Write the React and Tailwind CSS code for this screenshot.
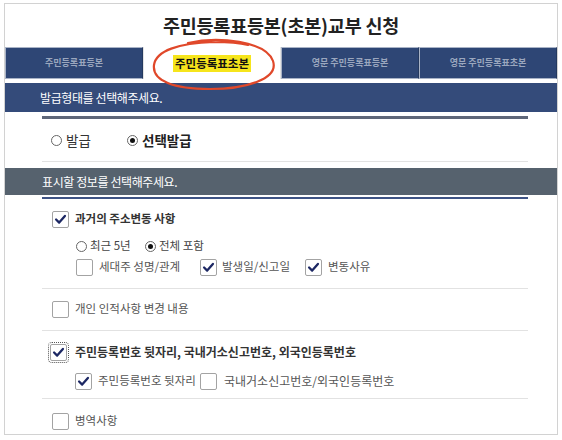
import React from "react";

// checkbox with the navy tick used on the form
function CheckBox({ checked, focused }) {
  return (
    <span
      className={`w-[17px] h-[17px] shrink-0 bg-white border border-[#a3a3a3] rounded-[2px] flex items-center justify-center ${
        focused ? "outline outline-1 outline-dotted outline-[#555] outline-offset-[1px]" : ""
      }`}
    >
      {checked && (
        <svg viewBox="0 0 17 17" className="w-[15px] h-[15px]">
          <path d="M3.5 8.5 L7 12 L13.5 4.5" fill="none" stroke="#1c2763" strokeWidth="2.6" strokeLinecap="round" strokeLinejoin="round" />
        </svg>
      )}
    </span>
  );
}

function Radio({ checked }) {
  return (
    <span className="w-[11px] h-[11px] shrink-0 rounded-full border border-[#666] bg-white flex items-center justify-center">
      {checked && <span className="w-[5px] h-[5px] rounded-full bg-[#111]" />}
    </span>
  );
}

const tabs = [
  { label: "주민등록표등본" },
  { label: "주민등록표초본", active: true },
  { label: "영문 주민등록표등본" },
  { label: "영문 주민등록표초본" },
];

export default function App() {
  return (
    <div className="relative w-[562px] h-[440px] bg-white pt-[3px] pl-[4px] font-['Noto_Sans_CJK_KR','Noto_Sans',sans-serif] text-[#333]">
      <div className="w-[554px] h-[432px] border border-[#d2d2d2] overflow-hidden">
        {/* Title */}
        <div className="h-[43px] flex items-center justify-center">
          <h1 className="text-[18.5px] font-bold text-[#222] tracking-[-0.2px]">주민등록표등본(초본)교부 신청</h1>
        </div>

        {/* Tabs */}
        <div className="flex h-[32px]">
          {tabs.map((t) =>
            t.active ? (
              <div key={t.label} className="flex-1 flex items-center justify-center bg-white border-x border-[#e3e3e3]">
                <span className="bg-[#f6e51c] px-[2px] text-[11.5px] font-bold text-[#111] leading-[17px]">{t.label}</span>
              </div>
            ) : (
              <div
                key={t.label}
                className="flex-1 flex items-center justify-center bg-[#2e4675] border border-[#a9b3c6] border-r-[#24395f]"
              >
                <span className="text-[9px] font-bold text-[#9ba7be]">{t.label}</span>
              </div>
            )
          )}
        </div>

        {/* 발급형태 */}
        <div className="mt-[4px] h-[29px] bg-[#344b7a] flex items-center pl-[35px]">
          <span className="text-[12px] text-white tracking-[-0.4px]">발급형태를 선택해주세요.</span>
        </div>
        <div className="ml-[37px] mr-[29px]">
          <div className="mt-[4px] h-[3px] bg-[#5f6779]" />
          <div className="h-[42px] flex items-center pl-[9px] text-[13.5px] text-[#333]">
            <div className="w-[76px] flex items-center gap-[4px]">
              <Radio />
              <span>발급</span>
            </div>
            <div className="flex items-center gap-[4px]">
              <Radio checked />
              <span className="font-semibold text-[#222]">선택발급</span>
            </div>
          </div>
          <div className="h-px bg-[#e2e2e2]" />
        </div>

        {/* 표시할 정보 */}
        <div className="mt-[6px] h-[27px] bg-[#56626e] flex items-center pl-[37px]">
          <span className="text-[12px] text-white tracking-[-0.4px]">표시할 정보를 선택해주세요.</span>
        </div>
        <div className="ml-[37px] mr-[29px] text-[11.5px]">
          <div className="mt-[2px] h-[2px] bg-[#3e5385]" />

          {/* 과거의 주소변동 사항 */}
          <div className="mt-[10px] h-[20px] flex items-center pl-[10px] gap-[6px]">
            <CheckBox checked />
            <span className="font-semibold text-[#333]">과거의 주소변동 사항</span>
          </div>
          <div className="mt-[7px] h-[20px] flex items-center pl-[34px] text-[#444]">
            <div className="w-[69px] flex items-center gap-[3px]">
              <Radio />
              <span>최근 5년</span>
            </div>
            <div className="flex items-center gap-[3px]">
              <Radio checked />
              <span>전체 포함</span>
            </div>
          </div>
          <div className="mt-[1px] h-[20px] flex items-center pl-[34px] text-[#555]">
            <div className="w-[124px] flex items-center gap-[6px]">
              <CheckBox />
              <span>세대주 성명/관계</span>
            </div>
            <div className="w-[105px] flex items-center gap-[5px]">
              <CheckBox checked />
              <span>발생일/신고일</span>
            </div>
            <div className="flex items-center gap-[6px]">
              <CheckBox checked />
              <span>변동사유</span>
            </div>
          </div>
          <div className="mt-[11px] h-px bg-[#e2e2e2]" />

          {/* 개인 인적사항 */}
          <div className="mt-[10px] h-[20px] flex items-center pl-[10px] gap-[6px]">
            <CheckBox />
            <span className="text-[#555]">개인 인적사항 변경 내용</span>
          </div>
          <div className="mt-[11px] h-px bg-[#e2e2e2]" />

          {/* 주민등록번호 */}
          <div className="mt-[11px] h-[20px] flex items-center pl-[8px] gap-[8px]">
            <CheckBox checked focused />
            <span className="text-[12px] font-semibold text-[#333]">주민등록번호 뒷자리, 국내거소신고번호, 외국인등록번호</span>
          </div>
          <div className="mt-[9px] h-[20px] flex items-center pl-[33px] text-[#555]">
            <div className="w-[125px] flex items-center gap-[6px]">
              <CheckBox checked />
              <span>주민등록번호 뒷자리</span>
            </div>
            <div className="flex items-center gap-[7px]">
              <CheckBox />
              <span className="text-[12px]">국내거소신고번호/외국인등록번호</span>
            </div>
          </div>
          <div className="mt-[7px] h-px bg-[#e2e2e2]" />

          {/* 병역사항 */}
          <div className="mt-[12px] h-[20px] flex items-center pl-[10px] gap-[6px]">
            <CheckBox />
            <span className="text-[#555]">병역사항</span>
          </div>
        </div>
      </div>

      {/* hand drawn red circle around the active tab */}
      <svg className="absolute left-[148px] top-[37px] w-[132px] h-[56px] pointer-events-none" viewBox="0 0 132 56">
        <path
          d="M40 6 C70 -1 118 4 125 24 C131 42 98 52 62 52 C26 52 4 44 6 28 C8 14 30 6 66 5 C80 5 92 6 100 8"
          fill="none"
          stroke="#e0482a"
          strokeWidth="2.2"
          strokeLinecap="round"
        />
      </svg>
    </div>
  );
}
